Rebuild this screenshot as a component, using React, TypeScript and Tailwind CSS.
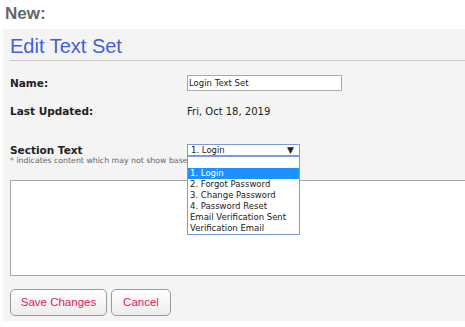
import React from "react";

const verdana = { fontFamily: '"DejaVu Sans", Verdana, sans-serif' };

export default function App() {
  const options = [
    "2. Forgot Password",
    "3. Change Password",
    "4. Password Reset",
    "Email Verification Sent",
    "Verification Email",
  ];
  return (
    <div className="relative w-[465px] h-[327px] overflow-hidden bg-white font-['Liberation_Sans',Arial,sans-serif]">
      <div className="h-[29px] pl-[5px] pt-[3px] text-[17px] font-bold text-[#666] leading-[22px]">New:</div>
      <div className="ml-[3px] w-[600px] bg-[#f4f4f4] pl-[7px] pb-[5px]">
        <div className="h-[32px] flex items-center border-b border-[#c8c8c8] text-[20px] text-[#4160d8] leading-none pt-[2px]">
          Edit Text Set
        </div>
        <div className="mt-[14px] flex items-center h-[16px]" style={verdana}>
          <div className="w-[177px] text-[10.5px] font-bold text-[#222] pt-[1px]">Name:</div>
          <div className="w-[155px] h-[16px] border border-[#a9a9a9] bg-white flex items-center pl-[1px] text-[8.5px] text-[#222]">
            Login Text Set
          </div>
        </div>
        <div className="mt-[12px] flex items-center h-[16px]" style={verdana}>
          <div className="w-[177px] text-[10.5px] font-bold text-[#222] pt-[1px]">Last Updated:</div>
          <div className="text-[10px] text-[#222] pt-[1px]">Fri, Oct 18, 2019</div>
        </div>
        <div className="mt-[25px] relative" style={verdana}>
          <div className="flex items-center h-[12px]">
            <div className="w-[177px] text-[10.5px] font-bold text-[#222] leading-none">Section Text</div>
            <div className="w-[113px] h-[12px] border border-[#7a9bd8] bg-white flex items-center justify-between pl-[3px] pr-[5px] text-[8.5px] text-[#222] leading-none">
              <span>1. Login</span>
              <span className="text-[9px]">▼</span>
            </div>
          </div>
          <div className="h-[10px] text-[7.8px] leading-[10px] text-[#666] whitespace-nowrap">
            * indicates content which may not show based on settings
          </div>
          <div className="absolute left-[177px] top-[12px] w-[113px] h-[79px] border border-[#7a9bd8] bg-white text-[8.5px] text-[#222] leading-[11px]">
            <div className="h-[11px]" />
            <div className="h-[11px] bg-[#1e90ff] text-white pl-[2px]">1. Login</div>
            {options.map((o) => (
              <div key={o} className="h-[11px] pl-[2px] whitespace-nowrap">{o}</div>
            ))}
          </div>
        </div>
        <div className="mt-[14px] h-[96px] border border-[#a9a9a9] bg-white" />
        <div className="mt-[13px] flex gap-[4px]">
          <button className="w-[97px] h-[27px] rounded-[5px] border border-[#9a9a9a] bg-gradient-to-b from-white to-[#ececec] text-[11.5px] text-[#d81b60]">
            Save Changes
          </button>
          <button className="w-[60px] h-[27px] rounded-[5px] border border-[#9a9a9a] bg-gradient-to-b from-white to-[#ececec] text-[11.5px] text-[#d81b60]">
            Cancel
          </button>
        </div>
      </div>
    </div>
  );
}
